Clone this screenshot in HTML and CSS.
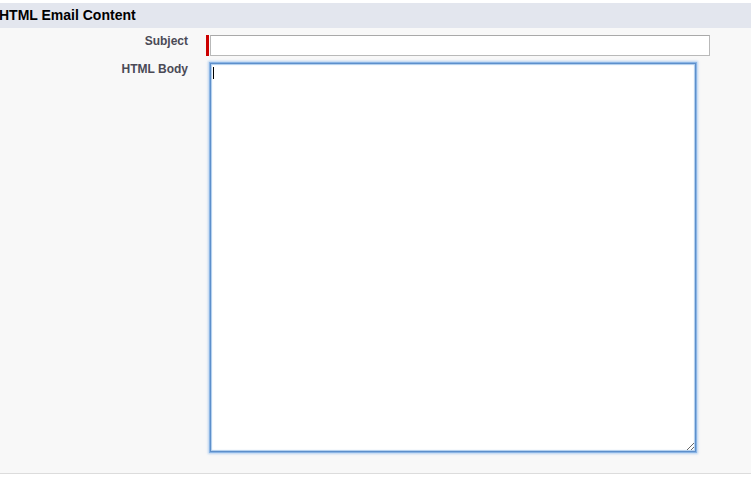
FILE: index.html
```html
<!DOCTYPE html>
<html>
<head>
<meta charset="utf-8">
<link rel="stylesheet" href="styles.css">
</head>
<body>
<div class="page">
  <h3 class="subheader">HTML Email Content</h3>
  <div class="section">
    <div class="form">
      <label class="label" for="subject">Subject</label>
      <div class="field required">
        <span class="req-bar"></span>
        <input id="subject" class="text-input" type="text">
      </div>
      <label class="label" for="body">HTML Body</label>
      <div class="field">
        <div class="area-wrap">
          <textarea id="body" class="text-area"></textarea>
          <span class="caret"></span>
        </div>
      </div>
    </div>
  </div>
</div>
</body>
</html>
```

FILE: styles.css
```css
html, body {
  margin: 0;
  padding: 0;
  background: #f8f8f8;
  font-family: "Liberation Sans", Arial, sans-serif;
}

.page {
  padding-top: 3px;
  background: #ffffff;
  height: 484px;
  overflow: hidden;
}

.subheader {
  margin: 0;
  height: 25px;
  line-height: 25px;
  background: #e3e6ee;
  color: #000;
  font-size: 14px;
  font-weight: bold;
  text-indent: -1px;
  white-space: nowrap;
}

.section {
  background: #f8f8f8;
  padding: 7px 0 21px 0;
  border-bottom: 1px solid #dcdcdc;
}

.form {
  display: grid;
  grid-template-columns: 188px 1fr;
  column-gap: 18px;
  row-gap: 7px;
}

.label {
  text-align: right;
  font-size: 12px;
  font-weight: bold;
  line-height: 14px;
  color: #4a4a56;
  margin-top: -1px;
}

.field {
  display: flex;
  align-items: flex-start;
}

.req-bar {
  width: 3px;
  height: 21px;
  background: #cc0000;
  margin-right: 1px;
}

.text-input {
  box-sizing: border-box;
  width: 500px;
  height: 21px;
  margin: 0;
  padding: 1px 3px;
  border: 1px solid #b9b9b9;
  border-top-color: #a9a9a9;
  background: #fff;
  font-family: "Liberation Sans", Arial, sans-serif;
  font-size: 12px;
  outline: none;
}

.area-wrap {
  position: relative;
  margin-left: 4px;
  margin-top: 0;
}

.text-area {
  display: block;
  box-sizing: border-box;
  width: 486px;
  height: 389px;
  margin: 0;
  padding: 2px;
  border: 1px solid #5d8fcb;
  background: #fff;
  box-shadow: inset 0 0 1px 1px rgba(120, 170, 225, 0.6), 0 0 0 1px #8ab4e4, 0 0 2px 2px rgba(140, 185, 235, 0.6);
  outline: none;
  font-family: "Liberation Sans", Arial, sans-serif;
  font-size: 12px;
  resize: both;
}

.caret {
  position: absolute;
  left: 3px;
  top: 4px;
  width: 1px;
  height: 12px;
  background: #000;
}
```
